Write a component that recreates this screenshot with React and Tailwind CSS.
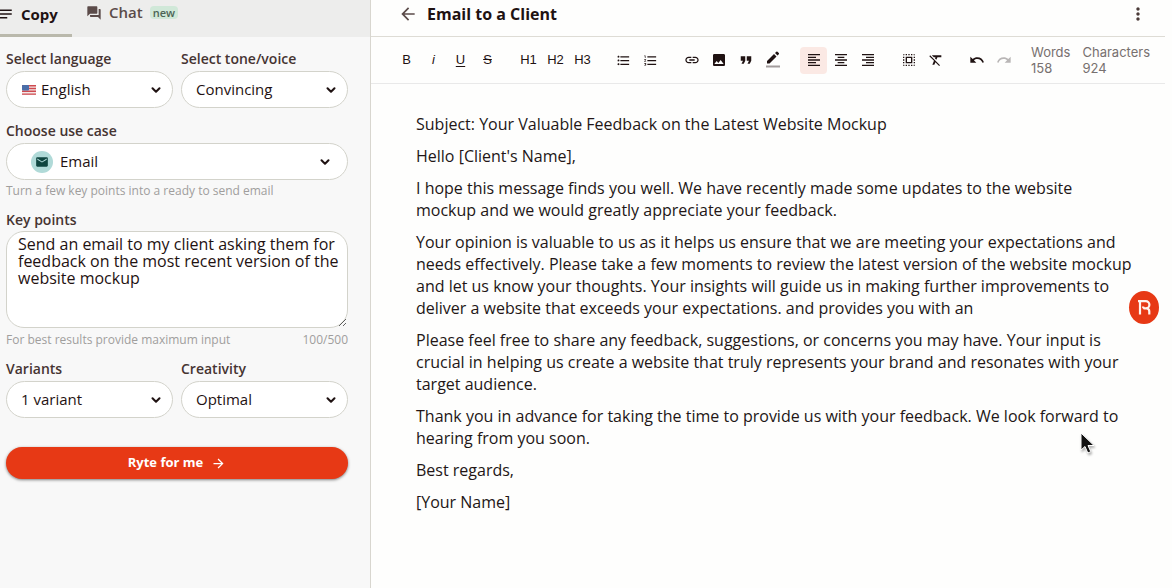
import React, { useState } from "react";
import {
  MdArrowBack,
  MdArrowForward,
  MdEmail,
  MdFormatAlignCenter,
  MdFormatAlignLeft,
  MdFormatAlignRight,
  MdFormatClear,
  MdFormatListBulleted,
  MdFormatListNumbered,
  MdFormatQuote,
  MdForum,
  MdImage,
  MdLink,
  MdMoreVert,
  MdNotes,
  MdRedo,
  MdSelectAll,
  MdUndo,
} from "react-icons/md";
import { ChevronDown } from "lucide-react";
import clsx from "clsx";

// Toolbar buttons, grouped the way they are spaced in the editor
const toolbar = [
  [
    { name: "Bold", content: "B" },
    { name: "Italic", content: <span className="italic">i</span> },
    { name: "Underline", content: <span className="underline underline-offset-2">U</span> },
    { name: "Strike", content: <span className="line-through">S</span> },
  ],
  [
    { name: "Heading 1", content: "H1" },
    { name: "Heading 2", content: "H2" },
    { name: "Heading 3", content: "H3" },
  ],
  [
    { name: "Bullet list", content: <MdFormatListBulleted size={15} /> },
    { name: "Numbered list", content: <MdFormatListNumbered size={15} /> },
  ],
  [
    { name: "Link", content: <MdLink size={16} /> },
    { name: "Image", content: <MdImage size={16} /> },
    { name: "Quote", content: <MdFormatQuote size={18} /> },
    { name: "Highlight", content: <HighlightIcon /> },
  ],
  [
    { name: "Align left", content: <MdFormatAlignLeft size={16} />, active: true },
    { name: "Align center", content: <MdFormatAlignCenter size={16} /> },
    { name: "Align right", content: <MdFormatAlignRight size={16} /> },
  ],
  [
    { name: "Select all", content: <MdSelectAll size={16} /> },
    { name: "Clear format", content: <MdFormatClear size={16} /> },
  ],
  [
    { name: "Undo", content: <MdUndo size={16} /> },
    { name: "Redo", content: <MdRedo size={16} />, disabled: true },
  ],
];

const email = [
  "Subject: Your Valuable Feedback on the Latest Website Mockup",
  "Hello [Client's Name],",
  "I hope this message finds you well. We have recently made some updates to the website mockup and we would greatly appreciate your feedback.",
  "Your opinion is valuable to us as it helps us ensure that we are meeting your expectations and needs effectively. Please take a few moments to review the latest version of the website mockup and let us know your thoughts. Your insights will guide us in making further improvements to deliver a website that exceeds your expectations. and provides you with an",
  "Please feel free to share any feedback, suggestions, or concerns you may have. Your input is crucial in helping us create a website that truly represents your brand and resonates with your target audience.",
  "Thank you in advance for taking the time to provide us with your feedback. We look forward to hearing from you soon.",
  "Best regards,",
  "[Your Name]",
];

function HighlightIcon() {
  return (
    <svg width="16" height="18" viewBox="0 0 16 18" aria-hidden="true">
      <path d="M2 12.5V10l7-7 2.500 2.500-7 7zM10 2l1.300-1.300a.9.9 0 0 1 1.200 0l1.300 1.300a.9.9 0 0 1 0 1.200L12.500 4.500z" fill="currentColor" />
      <path d="M1 14.500h14v2H1z" fill="#a39c9c" />
    </svg>
  );
}

function FlagIcon() {
  return (
    <svg width="14" height="10" viewBox="0 0 14 10" aria-hidden="true">
      <rect width="14" height="10" rx="1" fill="#f3e6e6" />
      <path d="M0 .7h14M0 3.500h14M0 6.300h14M0 9.100h14" stroke="#cf4a4f" strokeWidth="1.400" />
      <rect width="7" height="5.500" rx="1" fill="#4a6ea8" />
    </svg>
  );
}

const Select = ({ id, label, options, icon, iconClass, selectClass = "pl-3.5", chevronClass = "right-2.5" }) => (
  <div className="flex min-w-0 flex-1 flex-col gap-1">
    <label htmlFor={id} className="text-sm leading-4 font-semibold text-[#463432]">
      {label}
    </label>
    <div className="relative">
      {icon && (
        <span className={clsx("pointer-events-none absolute inset-y-0 flex items-center", iconClass)}>
          {icon}
        </span>
      )}
      <select
        id={id}
        className={clsx(
          "h-[37px] w-full appearance-none rounded-full border border-[#d3d3cb] bg-white text-[15px] text-[#1f1212]",
          selectClass
        )}
      >
        {options.map((option) => (
          <option key={option}>{option}</option>
        ))}
      </select>
      <span className={clsx("pointer-events-none absolute inset-y-0 flex items-center", chevronClass)}>
        <ChevronDown size={14} strokeWidth={3.5} className="text-[#1f1212]" />
      </span>
    </div>
  </div>
);

const Sidebar = () => {
  const [keyPoints, setKeyPoints] = useState(
    "Send an email to my client asking them for feedback on the most recent version of the website mockup"
  );

  return (
    <aside className="w-[371px] shrink-0 border-r border-[#d8d6cf] bg-[#f8f8f8]">
      {/* Tabs */}
      <nav className="flex h-[37px] overflow-hidden bg-[#ededec]">
        <button className="flex w-[72px] items-center gap-[7px] border-b-[3px] border-[#bab9ac] pb-1.5 text-[15px] font-bold text-[#1f1212]">
          <MdNotes size={18} className="-ml-1 shrink-0" />
          Copy
        </button>
        <button className="flex items-center gap-[7px] pb-3 pl-3.5 text-[15px] font-semibold text-[#5b4b49]">
          <MdForum size={16} />
          Chat
          <span className="rounded bg-[#d0e8d8] px-[3px] text-[11px] leading-[13px] text-[#4c6355]">new</span>
        </button>
      </nav>

      {/* Form */}
      <form className="flex flex-col pt-3.5 pr-[22px] pl-1.5" onSubmit={(e) => e.preventDefault()}>
        <div className="flex gap-2">
          <Select
            id="language"
            label="Select language"
            options={["English", "German", "Spanish"]}
            icon={<FlagIcon />}
            iconClass="left-4"
            selectClass="pl-[34px]"
          />
          <Select id="tone" label="Select tone/voice" options={["Convincing", "Casual", "Formal"]} />
        </div>

        <div className="mt-[15px] flex">
          <Select
            id="useCase"
            label="Choose use case"
            options={["Email", "Blog post", "Job description"]}
            icon={
              <span className="flex size-[22px] items-center justify-center rounded-full bg-[#b0dad8] text-[#0f4640]">
                <MdEmail size={14} />
              </span>
            }
            iconClass="left-[25px]"
            selectClass="pl-[53px]"
            chevronClass="right-4"
          />
        </div>
        <p className="mt-[3px] text-xs leading-4 text-[#a09e9d]">Turn a few key points into a ready to send email</p>

        <label htmlFor="keyPoints" className="mt-[13px] text-sm leading-4 font-semibold text-[#463432]">
          Key points
        </label>
        <textarea
          id="keyPoints"
          value={keyPoints}
          onChange={(e) => setKeyPoints(e.target.value)}
          className="mt-[3px] h-[97px] w-full resize rounded-[18px] border border-[#d3d3cb] bg-white pt-1 pr-1.5 pl-[11px] text-base leading-[17px] text-[#1f1212]"
        />
        <div className="mt-1 flex justify-between text-xs leading-4 text-[#a09e9d]">
          <span>For best results provide maximum input</span>
          <span>{keyPoints.length}/500</span>
        </div>

        <div className="mt-[13px] flex gap-2">
          <Select id="variants" label="Variants" options={["1 variant", "2 variants", "3 variants"]} />
          <Select id="creativity" label="Creativity" options={["Optimal", "Low", "High"]} />
        </div>

        <button
          type="submit"
          className="mt-[29px] flex h-8 items-center justify-center gap-2 rounded-full bg-[#e73915] text-[13px] font-bold text-white shadow-[0_1px_3px_rgba(0,0,0,0.5)]"
        >
          Ryte for me
          <MdArrowForward size={15} />
        </button>
      </form>
    </aside>
  );
};

const Editor = () => (
  <main className="mr-[7px] min-w-0 flex-1">
    <header className="flex h-[37px] items-center border-b border-[#dedcd5] pr-[17px] pb-2 pl-[27px]">
      <button aria-label="Back" className="text-[#5b4b49]">
        <MdArrowBack size={20} />
      </button>
      <h1 className="ml-[9px] font-bold text-[#1f1212]">Email to a Client</h1>
      <button aria-label="More options" className="ml-auto text-[#4a3a38]">
        <MdMoreVert size={20} />
      </button>
    </header>

    {/* Toolbar */}
    <div className="flex h-[47px] items-center gap-3.5 border-b border-[#e9e9e9] pl-[22px]">
      {toolbar.map((group) => (
        <div key={group[0].name} className="flex">
          {group.map(({ name, content, active, disabled }) => (
            <button
              key={name}
              aria-label={name}
              disabled={disabled}
              className={clsx(
                "flex size-[27px] items-center justify-center rounded font-['Liberation_Sans',sans-serif] text-[13px] text-[#1f1212] disabled:text-[#b9b6b6]",
                active && "bg-[#fbe9e4]"
              )}
            >
              {content}
            </button>
          ))}
        </div>
      ))}
      <dl className="flex gap-3 font-['Inter',sans-serif] text-[13px] leading-4 text-[#77706f]">
        <div>
          <dt>Words</dt>
          <dd>158</dd>
        </div>
        <div>
          <dt>Characters</dt>
          <dd>924</dd>
        </div>
      </dl>
    </div>

    {/* Generated text */}
    <article className="flex flex-col gap-2.5 pt-[29px] pr-[31px] pb-10 pl-[45px] leading-[22px] text-[#231616]">
      {email.map((paragraph) => (
        <p key={paragraph}>{paragraph}</p>
      ))}
    </article>
  </main>
);

export default function App() {
  return (
    <div className="relative flex min-h-screen overflow-hidden bg-[#fefefd] font-['Open_Sans',sans-serif]">
      <Sidebar />
      <Editor />

      {/* Floating launcher */}
      <button
        aria-label="Open assistant"
        className="absolute top-[291px] right-[13px] flex h-[33px] w-[30px] items-center justify-center rounded-[50%] bg-[#e73915]"
      >
        <svg width="13" height="15" viewBox="0 0 13 15" fill="none" stroke="#fff3ee" strokeWidth="2.2">
          <path d="M0 1.2h7.800a3.600 3.600 0 0 1 0 7.200H5.500M2 14.500V1.200M5 6.500c0 2 2 2 3.500 2 2 0 2.800 1.200 2.800 3v3" />
        </svg>
      </button>

      {/* Pointer */}
      <svg
        width="16"
        height="24"
        viewBox="0 0 16 24"
        className="pointer-events-none absolute top-[432px] left-[1080px] drop-shadow-[1px_2px_1px_rgba(0,0,0,0.3)]"
      >
        <path d="M1 1v17l4-3.500 2.800 6.500 3-1.300L8 13.500h6z" fill="#111" stroke="white" strokeWidth="1" />
      </svg>
    </div>
  );
}
